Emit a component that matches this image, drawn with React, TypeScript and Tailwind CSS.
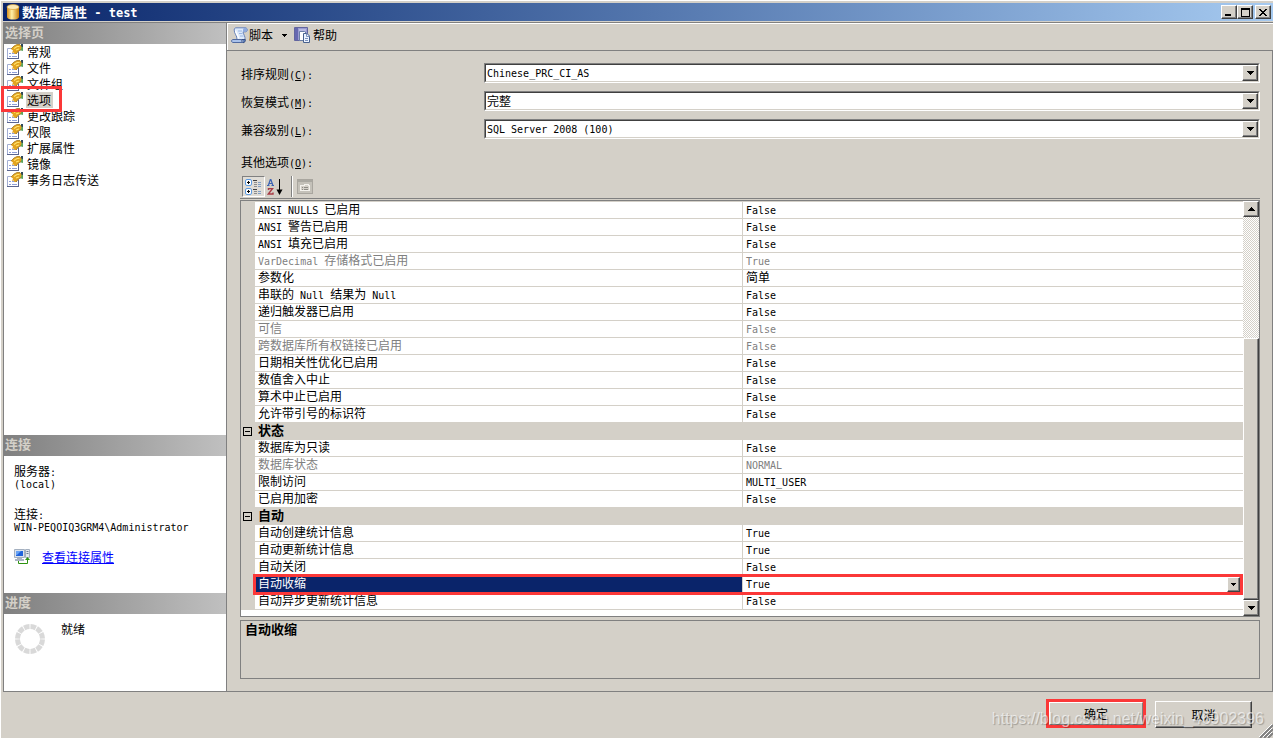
import { Fragment } from "react";

const pages = [
  "常规",
  "文件",
  "文件组",
  "选项",
  "更改跟踪",
  "权限",
  "扩展属性",
  "镜像",
  "事务日志传送",
];

type Row = {
  name: string;
  value?: string;
  category?: boolean;
  disabled?: boolean;
  selected?: boolean;
};

const rows: Row[] = [
  { name: "ANSI NULLS 已启用", value: "False" },
  { name: "ANSI 警告已启用", value: "False" },
  { name: "ANSI 填充已启用", value: "False" },
  { name: "VarDecimal 存储格式已启用", value: "True", disabled: true },
  { name: "参数化", value: "简单" },
  { name: "串联的 Null 结果为 Null", value: "False" },
  { name: "递归触发器已启用", value: "False" },
  { name: "可信", value: "False", disabled: true },
  { name: "跨数据库所有权链接已启用", value: "False", disabled: true },
  { name: "日期相关性优化已启用", value: "False" },
  { name: "数值舍入中止", value: "False" },
  { name: "算术中止已启用", value: "False" },
  { name: "允许带引号的标识符", value: "False" },
  { name: "状态", category: true },
  { name: "数据库为只读", value: "False" },
  { name: "数据库状态", value: "NORMAL", disabled: true },
  { name: "限制访问", value: "MULTI_USER" },
  { name: "已启用加密", value: "False" },
  { name: "自动", category: true },
  { name: "自动创建统计信息", value: "True" },
  { name: "自动更新统计信息", value: "True" },
  { name: "自动关闭", value: "False" },
  { name: "自动收缩", value: "True", selected: true },
  { name: "自动异步更新统计信息", value: "False" },
];

const raised =
  "bg-[#d4d0c8] border border-t-white border-l-white border-r-[#404040] border-b-[#404040] shadow-[inset_-1px_-1px_0_#808080]";

// Latin runs are half the width of a Chinese character
function Text({ children }: { children: string }) {
  return (
    <span className="whitespace-pre">
      {children.split(/([\x20-\x7e]+)/).map((part, i) =>
        i % 2 ? (
          <span key={i} className="font-['DejaVu_Sans_Mono',monospace] text-[10px] leading-none">
            {part}
          </span>
        ) : (
          <Fragment key={i}>{part}</Fragment>
        )
      )}
    </span>
  );
}

function Arrow({ up = false }: { up?: boolean }) {
  return (
    <svg width="7" height="4" viewBox="0 0 7 4" shapeRendering="crispEdges" aria-hidden="true">
      <path d={up ? "M3 0h1v1h1v1h1v1h1v1H0V3h1V2h1V1h1z" : "M0 0h7v1H6v1H5v1H4v1H3V3H2V2H1V1H0z"} />
    </svg>
  );
}

function DatabaseIcon() {
  return (
    <svg width="14" height="16" viewBox="0 0 14 16" aria-hidden="true">
      <defs>
        <linearGradient id="gold">
          <stop offset="0" stopColor="#d98f1a" />
          <stop offset=".4" stopColor="#fff0a8" />
          <stop offset="1" stopColor="#c57a08" />
        </linearGradient>
      </defs>
      <path d="M1 3v10c0 3.400 12 3.400 12 0V3z" fill="url(#gold)" />
      <ellipse cx="7" cy="3" rx="6" ry="2.500" fill="#fbe9b4" stroke="#d9a33c" strokeWidth=".7" />
    </svg>
  );
}

function PageIcon() {
  return (
    <svg width="16" height="16" viewBox="0 0 16 16" className="shrink-0" aria-hidden="true">
      <path d="M.5 4.500h11v10H.5z" fill="#fff" stroke="#a3aed2" />
      <path d="M0 14.500h12M11.500 8v7" stroke="#5b6690" />
      <path d="M2 9.500h2M5 9.500h5M2 12.500h2M5 12.500h5" stroke="#8f9fd8" />
      <path d="M12 1h4v6l-4-1z" fill="#5aa35c" />
      <path d="M14 0h2v3h-2z" fill="#2f4a5c" />
      <path d="M4 5l3-3 3-1.500h3l1.500 2-.5 3-2.500 1.500L9 10H7.500L7 8.500 5 9l1-2.500z" fill="#e3a41f" />
      <path d="M4 5l3-3 3-1.500h3" fill="none" stroke="#a67a20" strokeWidth=".8" />
      <path d="M7 4.500L10 2.500h2.500M9 6l3-1" fill="none" stroke="#ffe36e" strokeWidth="1.200" />
      <path d="M9 10l2.500-3 2.500-1.500" fill="none" stroke="#a0741c" strokeWidth=".8" />
    </svg>
  );
}

function ScriptIcon() {
  return (
    <svg width="17" height="17" viewBox="0 0 17 17" aria-hidden="true">
      <path d="M5 .8h10c1.800.8 1.500 3.600 0 4h-3c.3 2.500 2.500 4.500 2 7.700H6C6.500 9 3 6.500 3.200 3 3.300 1.500 4 .8 5 .8z" fill="#dce9fb" stroke="#6681b8" />
      <path d="M12 4.800V3c0-1.500 1-2.200 2.500-2.200 2 .5 2 3.500.5 4z" fill="#8faade" />
      <path d="M4.500 3.500c.2 3 3 5 3 8" fill="none" stroke="#fff" strokeWidth="1.400" />
      <path d="M7 4h4M8 6.500h3.500M9 9h3.500" stroke="#9cb6e2" />
      <path d="M2 12.500h9c-1 1-.5 2.500 1 3H2c-2-.3-2-2.700 0-3z" fill="#a9c1ea" stroke="#50699f" />
      <path d="M11 12.500h3.300c.3 2-.8 3.200-2.300 3.200" fill="#5f7fbb" stroke="#384f80" />
    </svg>
  );
}

function HelpIcon() {
  return (
    <svg width="16" height="16" viewBox="0 0 16 16" aria-hidden="true">
      <path d="M.5.5h13v13H.5z" fill="#9b9cd2" stroke="#62649f" />
      <path d="M1 1h3v12H1z" fill="#6668b0" />
      <path d="M5 2h7v2H5z" fill="#b9bae2" />
      <path d="M5.500 4.500h5l2 2v7h-7z" fill="#fff" stroke="#6b7fa6" />
      <path d="M9.500 6.500h3.500l2.500 2.500v6.500h-6z" fill="#eef4ff" stroke="#48628f" />
      <path d="M12.500 6.500V9.500h3M11 11.500h3M11 13.500h3" fill="none" stroke="#7e95bd" />
    </svg>
  );
}

function ServerIcon() {
  return (
    <svg width="17" height="16" viewBox="0 0 17 16" aria-hidden="true">
      <path d="M.5.5h10v8H.5z" fill="#dce3ec" stroke="#a4b0c0" />
      <path d="M2 2h7v5H2z" fill="#1f62dc" />
      <path d="M2 2h5L3 6H2z" fill="#69a3f4" />
      <path d="M3 9h5v1h2v2H1v-2h2z" fill="#aab4c2" />
      <path d="M11.500.5h4v8h-4z" fill="#e4e9ef" stroke="#a4b0c0" />
      <path d="M12.500 2.500h2M12.500 4.500h2" stroke="#6c7c93" />
      <path d="M4.500 12v2.500h9V9" fill="none" stroke="#2e9410" />
      <path d="M11 11l2.500-3 2.500 3z" fill="#2e9410" />
    </svg>
  );
}

function CategorizedIcon() {
  return (
    <svg width="17" height="17" viewBox="0 0 17 17" aria-hidden="true">
      <rect x=".5" y="1.500" width="6" height="6" rx="1.500" fill="#fff" stroke="#5f9be0" />
      <rect x=".5" y="10.500" width="6" height="6" rx="1.500" fill="#fff" stroke="#5f9be0" />
      <path d="M2 4.500h3M3.500 3v3M2 13.500h3M3.500 12v3" stroke="#000" />
      <path d="M8 2.500h4M8 11.500h4" stroke="#404040" />
      <path d="M9 4.500h3M9 6.500h3M9 8.500h3M9 13.500h3M9 15.500h3" stroke="#8c8c8c" />
      <path d="M13 4.500h3M13 6.500h3M13 8.500h3M13 13.500h3M13 15.500h3" stroke="#7f9dc4" />
    </svg>
  );
}

function SortIcon() {
  return (
    <svg width="17" height="16" viewBox="0 0 17 16" aria-hidden="true">
      <path d="M0 6.500h2.500M4.500 6.500H7M1.300 6.500L3.300.6h.6l2 5.900M2 4.500h3" fill="none" stroke="#3c64b4" strokeWidth="1.200" />
      <path d="M1.500 11V9.600H5.500L1.300 15H6V13.500" fill="none" stroke="#a83c46" strokeWidth="1.400" />
      <path d="M12.500 0v12" stroke="#000" />
      <path d="M9.500 10.500h6L12.500 16z" />
    </svg>
  );
}

function PropertyPagesIcon() {
  return (
    <svg width="16" height="16" viewBox="0 0 16 16" shapeRendering="crispEdges" aria-hidden="true">
      <path d="M.5.5h15v14H.5z" fill="#c4c1b9" stroke="#a9a69f" />
      <path d="M1 1h14v2H1z" fill="#aaa8a1" />
      <path d="M3.500 6.500h4v-1h4v1h1v5h-9z" fill="#d4d0c8" stroke="#f4f2ed" />
      <path d="M5 8.500h1M7 8.500h4M5 10.500h1M7 10.500h4" stroke="#8e8c86" />
    </svg>
  );
}

function Spinner() {
  return (
    <svg width="32" height="32" viewBox="0 0 32 32" aria-hidden="true">
      <circle cx="16" cy="16" r="12.500" fill="none" stroke="#d9d9d9" strokeWidth="5" pathLength="120" strokeDasharray="8.500 1.500" strokeDashoffset="-.75" />
    </svg>
  );
}

function SideHeader({ children }: { children: string }) {
  return (
    <h2 className="h-[21px] shrink-0 bg-linear-to-r from-[#808080] to-[#c0c0c0] pl-px text-[13px] leading-[17px] font-bold text-[#d4d0c8]">
      {children}
    </h2>
  );
}

function Hotkey({ letter }: { letter: string }) {
  return (
    <span className="font-['DejaVu_Sans_Mono',monospace] text-[10px] leading-none">
      (<u>{letter}</u>):
    </span>
  );
}

function Field({ id, label, hotkey, value }: { id: string; label: string; hotkey: string; value: string }) {
  const latin = /^[\x20-\x7e]+$/.test(value);
  return (
    <div className="flex h-5 items-center">
      <label htmlFor={id} className="w-[243px] shrink-0 pt-0.5">
        {label}
        <Hotkey letter={hotkey} />
      </label>
      <div className="relative h-5 flex-1 border border-t-[#808080] border-r-white border-b-white border-l-[#808080]">
        <select
          id={id}
          className={`block size-full appearance-none rounded-none border border-t-[#404040] border-r-[#d4d0c8] border-b-[#d4d0c8] border-l-[#404040] bg-white pl-px outline-none ${
            latin ? "pt-px font-['DejaVu_Sans_Mono',monospace] text-[10px] leading-4" : "text-xs leading-4"
          }`}
        >
          <option>{value}</option>
        </select>
        <span className={`pointer-events-none absolute top-px right-px flex h-4 w-4 items-center justify-center ${raised}`}>
          <Arrow />
        </span>
      </div>
    </div>
  );
}

function TitleBar() {
  return (
    <header className="flex h-[18px] items-center bg-linear-to-r from-[#0a246a] to-[#a6caf0] pr-0.5 pl-[3px]">
      <DatabaseIcon />
      <h1 className="ml-0.5 flex-1 text-[13px] leading-4 font-bold text-white">
        数据库属性
        <span className="font-['DejaVu_Sans_Mono',monospace] text-xs leading-none whitespace-pre"> - test</span>
      </h1>
      <button aria-label="最小化" className={`flex h-3.5 w-4 items-end pb-0.5 pl-[3px] ${raised}`}>
        <span className="h-0.5 w-1.5 bg-black" />
      </button>
      <button aria-label="最大化" className={`flex h-3.5 w-4 items-center justify-center ${raised}`}>
        <span className="h-[9px] w-[9px] border border-t-2 border-black" />
      </button>
      <button aria-label="关闭" className={`ml-0.5 flex h-3.5 w-4 items-center justify-center ${raised}`}>
        <svg width="8" height="7" viewBox="0 0 8 7" shapeRendering="crispEdges" aria-hidden="true">
          <path d="M0 0h2v1h1v1h2V1h1V0h2v1H7v1H6v1H5v1h1v1h1v1h1v1H6V6H5V5H3v1H2v1H0V6h1V5h1V4h1V3H2V2H1V1H0z" />
        </svg>
      </button>
    </header>
  );
}

function Sidebar() {
  return (
    <aside className="flex w-[223px] shrink-0 flex-col border-r border-[#808080] bg-white">
      <SideHeader>选择页</SideHeader>
      <ul className="flex-1">
        {pages.map((page) => (
          <li key={page} className="relative h-4">
            <button className="flex h-4 items-center pl-[3px] leading-4">
              <PageIcon />
              <span className={`ml-[3px] h-4 pr-0.5 pl-px ${page === "选项" ? "bg-[#d4d0c8]" : ""}`}>{page}</span>
            </button>
            {page === "选项" && (
              <span className="pointer-events-none absolute -top-1.5 -left-[3px] z-10 h-[26px] w-[61px] border-3 border-[#fb3838]" />
            )}
          </li>
        ))}
      </ul>

      <SideHeader>连接</SideHeader>
      <div className="h-[137px] pt-[9px] pl-2.5 leading-3">
        <p>
          <Text>服务器:</Text>
        </p>
        <p className="leading-[10px]">
          <Text>(local)</Text>
        </p>
        <p className="mt-[18px]">
          <Text>连接:</Text>
        </p>
        <p className="leading-[10px]">
          <Text>WIN-PEQOIQ3GRM4\Administrator</Text>
        </p>
        <div className="mt-4 flex items-center gap-[11px] leading-4">
          <ServerIcon />
          <a href="#" className="text-[#0000ff] underline">
            查看连接属性
          </a>
        </div>
      </div>

      <SideHeader>进度</SideHeader>
      <div className="flex h-[77px] items-start gap-[15px] pt-[9px] pl-2.5 leading-3">
        <Spinner />
        <p>就绪</p>
      </div>
    </aside>
  );
}

function PropertyRow({ row }: { row: Row }) {
  if (row.category) {
    return (
      <tr className="h-[17px]">
        <td className="p-0 pl-0.5">
          <button aria-label={`折叠 ${row.name}`} className="flex size-[9px] items-center justify-center border border-black">
            <span className="h-px w-[5px] bg-black" />
          </button>
        </td>
        <th colSpan={2} scope="colgroup" className="p-0 pl-[3px] text-left align-top text-[13px] font-bold">
          {row.name}
        </th>
      </tr>
    );
  }
  return (
    <tr className={`h-[17px] ${row.disabled ? "text-[#808080]" : ""}`}>
      <td className="p-0" />
      <th
        scope="row"
        className={`border-r border-b border-[#d4d0c8] p-0 pl-[3px] text-left align-top font-normal ${
          row.selected ? "bg-[#0a246a] text-white" : "bg-white"
        }`}
      >
        <Text>{row.name}</Text>
      </th>
      <td className="relative border-b border-[#d4d0c8] bg-white p-0 pl-[3px] align-top">
        <Text>{row.value ?? ""}</Text>
        {row.selected && (
          <>
            <button aria-label="展开" className={`absolute top-px right-[3px] flex h-[15px] w-[13px] items-center justify-center ${raised}`}>
              <svg width="5" height="3" viewBox="0 0 5 3" shapeRendering="crispEdges" aria-hidden="true">
                <path d="M0 0h5v1H4v1H3v1H2V2H1V1H0z" />
              </svg>
            </button>
            <span className="pointer-events-none absolute -top-0.5 right-0 -left-[490px] z-10 h-[21px] border-3 border-[#fb3838]" />
          </>
        )}
      </td>
    </tr>
  );
}

function PropertyGrid() {
  return (
    <div className="flex border border-[#808080] bg-white">
      <div className="min-w-0 flex-1 pb-1.5">
        <table className="w-full table-fixed border-separate border-spacing-0 border-t border-[#d4d0c8] bg-[#d4d0c8] leading-[14px]">
          <colgroup>
            <col className="w-3.5" />
            <col className="w-[488px]" />
            <col />
          </colgroup>
          <tbody>
            {rows.map((row) => (
              <PropertyRow key={row.name} row={row} />
            ))}
          </tbody>
        </table>
      </div>
      <div className="flex w-4 flex-col bg-[repeating-conic-gradient(#ffffff_0_25%,#d4d0c8_0_50%)] bg-[length:2px_2px]">
        <button aria-label="向上滚动" className={`flex h-4 items-center justify-center ${raised}`}>
          <Arrow up />
        </button>
        <div className={`mt-[121px] flex-1 ${raised}`} />
        <button aria-label="向下滚动" className={`flex h-4 items-center justify-center ${raised}`}>
          <Arrow />
        </button>
      </div>
    </div>
  );
}

function OptionsPage() {
  return (
    <main className="flex min-w-0 flex-1 flex-col">
      <div className="flex h-[27px] items-center border-t border-l border-white pb-1 pl-[3px]">
        <button className="flex items-center gap-px">
          <ScriptIcon />
          脚本
          <svg width="5" height="3" viewBox="0 0 5 3" className="ml-2" shapeRendering="crispEdges" aria-hidden="true">
            <path d="M0 0h5v1H4v1H3v1H2V2H1V1H0z" />
          </svg>
        </button>
        <button className="ml-[7px] flex items-center gap-[3px]">
          <HelpIcon />
          帮助
        </button>
      </div>

      <div className="flex-1 border-t border-r border-[#808080] px-3 pt-3 pb-3">
        <div className="ml-0.5 flex flex-col gap-2">
          <Field id="collation" label="排序规则" hotkey="C" value="Chinese_PRC_CI_AS" />
          <Field id="recovery" label="恢复模式" hotkey="M" value="完整" />
          <Field id="compat" label="兼容级别" hotkey="L" value="SQL Server 2008 (100)" />
        </div>
        <p className="mt-[13px] ml-0.5 leading-5">
          其他选项
          <Hotkey letter="O" />
        </p>

        <div className="ml-px">
          <div className="mt-1 mb-px flex h-[23px] items-start border-b border-[#808080] pl-0.5">
            <button
              aria-label="按分类顺序"
              className="flex h-[21px] w-[23px] items-center justify-center border border-t-[#808080] border-r-white border-b-white border-l-[#808080] bg-[#e0ddd7]"
            >
              <CategorizedIcon />
            </button>
            <button aria-label="字母顺序" className="ml-0.5 flex h-[21px] items-center">
              <SortIcon />
            </button>
            <span className="ml-[7px] h-[21px] w-0.5 border-r border-l border-r-white border-l-[#808080]" />
            <button aria-label="属性页" disabled className="ml-1 flex h-[21px] items-center">
              <PropertyPagesIcon />
            </button>
          </div>
          <PropertyGrid />
          <section className="mt-[3px] h-[59px] border border-[#808080] pl-1">
            <h3 className="text-[13px] leading-4 font-bold">自动收缩</h3>
          </section>
        </div>
      </div>
    </main>
  );
}

export default function App() {
  return (
    <div className="relative flex min-h-screen flex-col border border-b-0 border-white bg-[#d4d0c8] pt-0.5 pl-0.5 font-['Noto_Sans_CJK_SC',sans-serif] text-xs text-black">
      <TitleBar />
      <div className="mt-px flex flex-1 border-y border-l border-[#808080]">
        <Sidebar />
        <OptionsPage />
      </div>
      <footer className="flex h-[46px] items-start justify-end gap-[9px] pt-[7px] pr-[21px]">
        <span className="border-3 border-[#fb3838]">
          <button className="block h-[23px] w-[94px] border border-t-white border-r-[#808080] border-b-[#808080] border-l-white">
            确定
          </button>
        </span>
        <button className={`mt-0.5 h-[27px] w-[97px] ${raised}`}>取消</button>
      </footer>

      <p className="pointer-events-none absolute right-[9px] bottom-[7px] font-['Liberation_Sans',sans-serif] text-base leading-6 text-white/60 [text-shadow:1px_1px_1px_rgba(0,0,0,0.25)]">
        https://blog.csdn.net/weixin_46902396
      </p>
      <svg width="14" height="14" viewBox="0 0 14 14" className="absolute right-0 bottom-0" aria-hidden="true">
        <path d="M1 14L14 1M5 14L14 5M9 14L14 9" stroke="#808080" strokeWidth="2" />
        <path d="M0 13L13 0M4 13L13 4M8 13L13 8" stroke="#fff" />
      </svg>
    </div>
  );
}
